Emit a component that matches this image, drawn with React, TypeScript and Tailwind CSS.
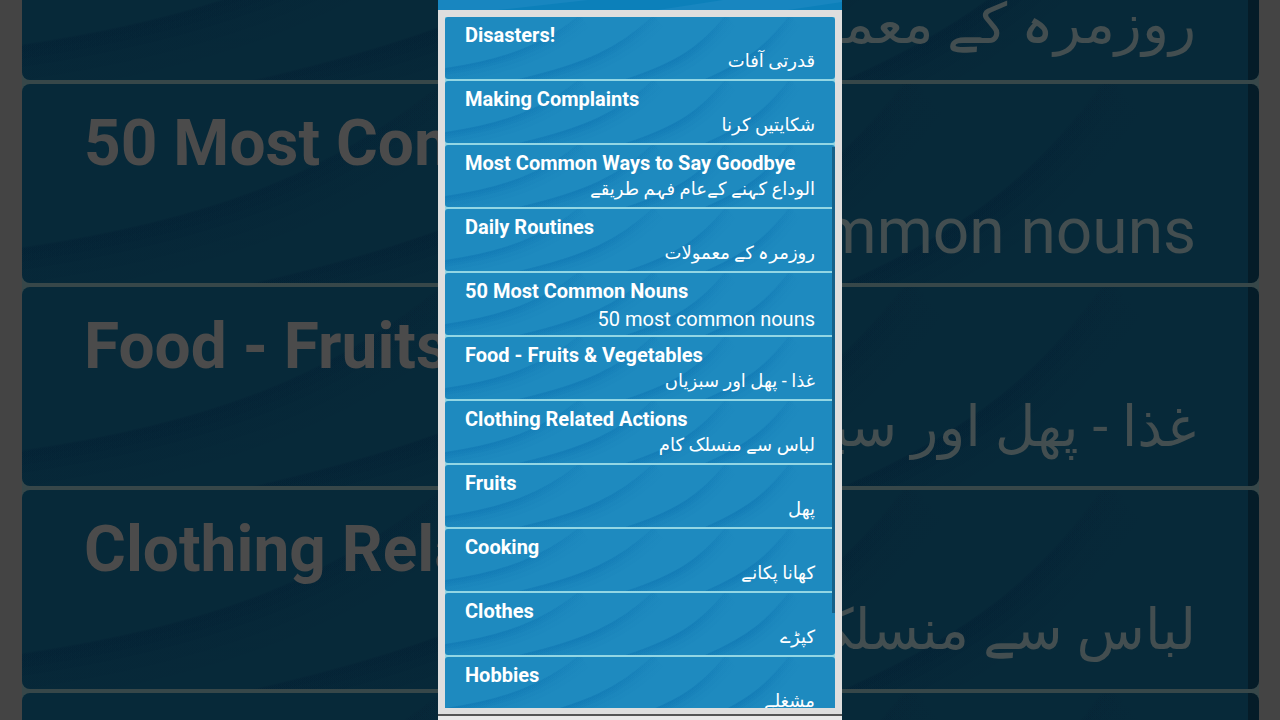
import { useId } from 'react';
import { clsx } from 'clsx';

type Lesson = {
  title: string;
  translation: string;
  lang: 'ur' | 'en';
};

const lessons: Lesson[] = [
  { title: 'Disasters!', translation: 'قدرتی آفات', lang: 'ur' },
  { title: 'Making Complaints', translation: 'شکایتیں کرنا', lang: 'ur' },
  { title: 'Most Common Ways to Say Goodbye', translation: 'الوداع کہنے کےعام فہم طریقے', lang: 'ur' },
  { title: 'Daily Routines', translation: 'روزمرہ کے معمولات', lang: 'ur' },
  { title: '50 Most Common Nouns', translation: '50 most common nouns', lang: 'en' },
  { title: 'Food - Fruits & Vegetables', translation: 'غذا - پھل اور سبزیاں', lang: 'ur' },
  { title: 'Clothing Related Actions', translation: 'لباس سے منسلک کام', lang: 'ur' },
  { title: 'Fruits', translation: 'پھل', lang: 'ur' },
  { title: 'Cooking', translation: 'کھانا پکانے', lang: 'ur' },
  { title: 'Clothes', translation: 'کپڑے', lang: 'ur' },
  { title: 'Hobbies', translation: 'مشغلے', lang: 'ur' },
];

const folds = [
  'M-5 53C60 44 100 28 136 -2',
  'M70 64C140 48 175 32 210 -2',
  'M178 64C235 46 258 28 282 -2',
  'M258 64C305 44 325 26 346 -2',
];

type WavesProps = {
  color: string;
  viewBox?: string;
};

// Soft curved folds behind the text of every card
const Waves = ({ color, viewBox = '0 0 390 62' }: WavesProps) => {
  const id = useId();

  return (
    <svg
      className="absolute inset-0 h-full w-full"
      viewBox={viewBox}
      preserveAspectRatio="none"
      aria-hidden="true"
    >
      <defs>
        <linearGradient id={id} gradientUnits="userSpaceOnUse" x1="0" y1="0" x2="0" y2="62">
          <stop offset="0" stopColor={color} stopOpacity="0.05" />
          <stop offset="0.7" stopColor={color} stopOpacity="0.18" />
          <stop offset="1" stopColor={color} stopOpacity="0.14" />
        </linearGradient>
      </defs>
      <g fill="none" stroke={`url(#${id})`}>
        {folds.map((d) => (
          <g key={d}>
            <path d={d} strokeWidth="2" />
            <path d={d} strokeWidth="4" transform="translate(1 1)" />
            <path d={d} strokeWidth="7" transform="translate(1 2)" />
            <path d={d} strokeWidth="11" transform="translate(2 4)" strokeOpacity="0.6" />
            <path d={d} strokeWidth="16" transform="translate(3 6)" strokeOpacity="0.4" />
          </g>
        ))}
      </g>
    </svg>
  );
};

// Enlarged, dimmed rows seen on both sides of the phone screen
const backdropRows = lessons.slice(3, 8);

const BackdropLeft = () => (
  <div aria-hidden="true" className="h-screen min-w-0 overflow-hidden bg-[#444444] pl-[22px]">
    <div className="flex flex-col gap-1 bg-[#374749]">
      {backdropRows.map((lesson, i) => (
        <div
          key={lesson.title}
          className={clsx(
            'relative shrink-0 overflow-hidden bg-[#072939] pl-[62px]',
            i === 0 ? 'h-20 rounded-bl-lg' : 'h-[199px] rounded-l-lg pt-5'
          )}
        >
          <Waves color="#021f33" viewBox={i === 0 ? '0 37 131 25' : '0 0 131 62'} />
          {i > 0 && i < 4 && (
            <span className="relative block whitespace-nowrap text-[64px] leading-[80px] font-bold text-[#4b4b4b]">
              {lesson.title}
            </span>
          )}
        </div>
      ))}
    </div>
  </div>
);

const BackdropRight = () => (
  <div aria-hidden="true" className="h-screen min-w-0 overflow-hidden bg-[#444444] pr-[21px]">
    <div className="flex flex-col gap-1 bg-[#374749]">
      {backdropRows.map((lesson, i) => (
        <div
          key={lesson.title}
          className={clsx(
            'relative flex shrink-0 flex-col items-end overflow-hidden border-r-11 border-[#051c28] bg-[#072939] pr-[52px]',
            i === 0 ? 'h-20 justify-end rounded-br-lg pb-4' : 'h-[199px] rounded-r-lg pt-25'
          )}
        >
          <Waves color="#021f33" viewBox={i === 0 ? '259 37 131 25' : '259 0 131 62'} />
          {i < 4 && (
            <span
              lang={lesson.lang}
              dir={lesson.lang === 'ur' ? 'rtl' : 'ltr'}
              className={clsx(
                'relative whitespace-nowrap text-[#434e50]',
                lesson.lang === 'ur' ? 'text-[56px] leading-[80px]' : 'text-[64px] leading-[96px]'
              )}
            >
              {lesson.translation}
            </span>
          )}
        </div>
      ))}
    </div>
  </div>
);

const LessonCard = ({ lesson }: { lesson: Lesson }) => (
  <li className="shrink-0">
    <button
      type="button"
      className="relative flex h-[62px] w-full flex-col overflow-hidden rounded-[3px] bg-[#1e8abf] px-5 pt-1 text-white"
    >
      <Waves color="#0b72b0" />
      <span className="relative self-start whitespace-nowrap text-xl leading-7 font-bold">
        {lesson.title}
      </span>
      <span
        lang={lesson.lang}
        dir={lesson.lang === 'ur' ? 'rtl' : 'ltr'}
        className={clsx(
          'relative self-end whitespace-nowrap',
          lesson.lang === 'ur' ? 'text-lg leading-6' : 'text-xl leading-7'
        )}
      >
        {lesson.translation}
      </span>
    </button>
  </li>
);

const App = () => {
  return (
    <div className="grid h-screen grid-cols-[1fr_auto_1fr] overflow-hidden font-['Roboto','DejaVu_Sans',sans-serif]">
      <BackdropLeft />

      <main className="flex aspect-[101/180] h-screen flex-col bg-[#dedede]">
        <header className="h-[10px] shrink-0 bg-[#0c80ba]">
          <svg className="h-full w-full" viewBox="0 0 404 10" preserveAspectRatio="none" aria-hidden="true">
            <path d="M0 0H150L60 10H0Z" fill="#1886c0" />
            <path d="M285 0H404V10H220Z" fill="#1886c0" />
            <path d="M404 2V10H350Z" fill="#0c80ba" />
          </svg>
        </header>

        <div className="relative mx-[7px] mt-[7px] flex-1 overflow-hidden">
          <ul className="flex flex-col gap-[2px] bg-[#92d6e4]">
            {lessons.map((lesson) => (
              <LessonCard key={lesson.title} lesson={lesson} />
            ))}
          </ul>
          {/* Scroll indicator */}
          <div className="absolute top-[130px] right-0 h-[466px] w-[3px] bg-[#14618a]" />
        </div>

        <div className="mt-[6px] h-[2px] shrink-0 bg-[#555555]" />
        <div className="h-1 shrink-0 bg-[#e9e9e9]" />
      </main>

      <BackdropRight />
    </div>
  );
};

export default App;
